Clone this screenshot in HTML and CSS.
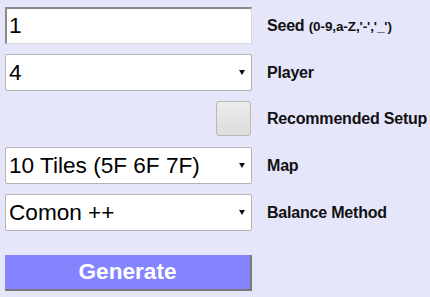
FILE: index.html
```html
<!DOCTYPE html>
<html>
<head>
<meta charset="utf-8">
<link rel="stylesheet" href="styles.css">
</head>
<body>
<form class="form">
  <div class="row">
    <div class="ctl"><input class="field seed" type="text" value="1"></div>
    <label class="lbl">Seed <span class="hint">(0-9,a-Z,'-','_')</span></label>
  </div>
  <div class="row">
    <div class="ctl sel"><select class="field"><option>4</option></select></div>
    <label class="lbl">Player</label>
  </div>
  <div class="row row-check">
    <div class="ctl ctl-check"><span class="check"></span></div>
    <label class="lbl">Recommended Setup</label>
  </div>
  <div class="row">
    <div class="ctl sel"><select class="field"><option>10 Tiles (5F 6F 7F)</option></select></div>
    <label class="lbl">Map</label>
  </div>
  <div class="row row-last">
    <div class="ctl sel"><select class="field"><option>Comon ++</option></select></div>
    <label class="lbl">Balance Method</label>
  </div>
  <div class="row row-btn">
    <div class="ctl"><button type="button" class="generate">Generate</button></div>
  </div>
</form>
</body>
</html>
```

FILE: styles.css
```css
html, body {
  margin: 0;
  padding: 0;
  background: #e6e6fa;
}
body {
  font-family: "Liberation Sans", Arial, sans-serif;
  color: #111;
}
.form {
  display: flex;
  flex-direction: column;
  padding: 7px 0 0 5px;
}
.row {
  display: flex;
  align-items: center;
  gap: 15px;
  height: 37px;
  margin-bottom: 10px;
}
.row-check {
  height: 35px;
  margin-bottom: 11px;
}
.row-last {
  margin-bottom: 24px;
}
.row-btn {
  height: 36px;
}
.ctl {
  position: relative;
  width: 247px;
  height: 100%;
  flex: none;
}
.field {
  box-sizing: border-box;
  width: 100%;
  height: 100%;
  margin: 0;
  background: #fff;
  border: 1px solid #b4b4b4;
  border-radius: 2px;
  font-family: "Liberation Sans", Arial, sans-serif;
  font-size: 22.6px;
  color: #000;
  padding: 0 3px;
  outline: none;
  -webkit-appearance: none;
  appearance: none;
}
.seed {
  border-radius: 0;
  border-top: 2px solid #8a8a8a;
  border-left: 2px solid #8a8a8a;
  border-right: 1px solid #d8d8d8;
  border-bottom: 1px solid #d8d8d8;
  padding-left: 2px;
}
.sel::after {
  content: "";
  position: absolute;
  right: 7px;
  top: 16px;
  border-left: 3px solid transparent;
  border-right: 3px solid transparent;
  border-top: 5px solid #111;
}
.ctl-check {
  display: flex;
  justify-content: flex-end;
}
.check {
  box-sizing: border-box;
  width: 35px;
  height: 35px;
  margin-right: 1px;
  border: 1px solid #b9b9b9;
  border-radius: 3px;
  background: linear-gradient(#ececec, #dcdcdc);
}
.lbl {
  font-size: 16px;
  font-weight: bold;
  letter-spacing: -0.2px;
  white-space: nowrap;
}
.hint {
  font-size: 13.5px;
  letter-spacing: -0.1px;
}
.generate {
  box-sizing: border-box;
  width: 100%;
  height: 100%;
  margin: 0;
  background: #8484ff;
  border: none;
  border-right: 2px solid #7a7a7a;
  border-bottom: 2px solid #7a7a7a;
  color: #fff;
  font-family: "Liberation Sans", Arial, sans-serif;
  font-size: 22.6px;
  font-weight: bold;
  padding: 0;
}
```
